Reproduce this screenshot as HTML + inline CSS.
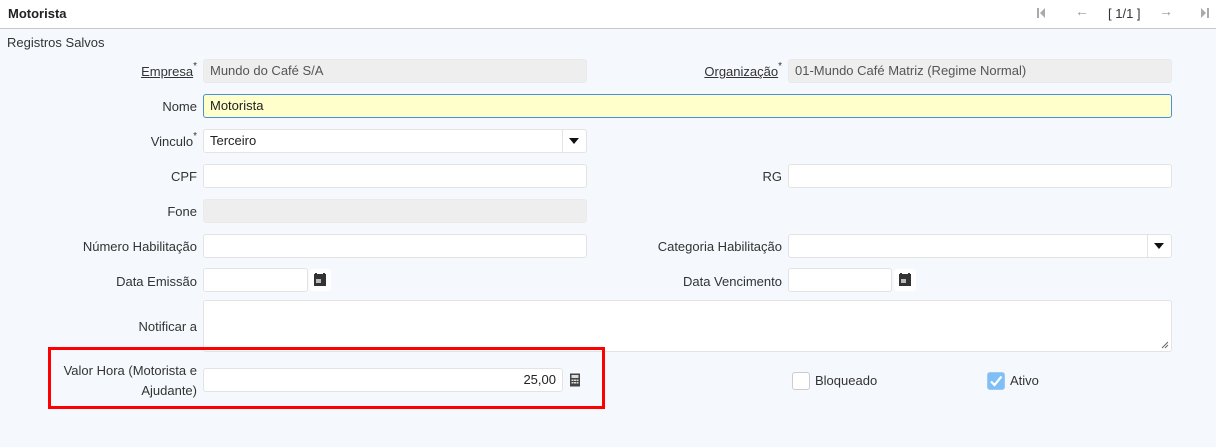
<!DOCTYPE html>
<html><head><meta charset="utf-8"><style>
*{box-sizing:border-box;margin:0;padding:0}
body{width:1216px;height:447px;background:#f5f8fc;font-family:"Liberation Sans",sans-serif;font-size:13px;color:#333;position:relative;overflow:hidden}
.hdr{position:absolute;left:0;top:0;width:1216px;height:29px;background:#fff;border-bottom:1px solid #c8c8c8}
.t{position:absolute;white-space:nowrap}
.lbl{position:absolute;text-align:right;white-space:nowrap;color:#333}
.l{right:1019px}.r{right:434px}
.in{position:absolute;background:#fff;border:1px solid #e3e3e3;border-radius:3px;height:24px;padding:0 6px;line-height:22px;color:#222}
.g{background:#eeeeee;border-color:#eaeaea;color:#555}
sup{font-size:10px;vertical-align:top;position:relative;top:-3px}
u{text-decoration:underline}
.dd{position:absolute;top:0;right:0;width:24px;height:22px;border-left:1px solid #e3e3e3}
.dd:after{content:"";position:absolute;left:6px;top:8px;border-left:5px solid transparent;border-right:5px solid transparent;border-top:6px solid #111}
.cal{position:absolute;width:22px;height:22px;background:#fff;border-radius:3px}
.cb{position:absolute;width:18px;height:18px;border:1px solid #ccc;border-radius:3px;background:#fff}
</style></head><body>
<div class="hdr"></div>
<div class="t" style="left:8px;top:6px;font-weight:bold;color:#222">Motorista</div>
<svg class="t" style="left:1036px;top:7px" width="10" height="12"><rect x="1" y="1" width="2" height="10" fill="#aaa"/><path d="M9 1 L4 6 L9 11Z" fill="#aaa"/></svg>
<div class="t" style="left:1075px;top:3px;color:#999;font-size:14px">←</div>
<div class="t" style="left:1108px;top:6px;color:#333">[ 1/1 ]</div>
<div class="t" style="left:1159px;top:3px;color:#999;font-size:14px">→</div>
<svg class="t" style="left:1200px;top:7px" width="10" height="12"><path d="M1 1 L6 6 L1 11Z" fill="#aaa"/><rect x="7" y="1" width="2" height="10" fill="#aaa"/></svg>
<div class="t" style="left:7px;top:35px">Registros Salvos</div>

<div class="lbl l" style="top:64px"><u>Empresa</u><sup>*</sup></div>
<div class="in g" style="left:203px;top:59px;width:384px">Mundo do Café S/A</div>
<div class="lbl r" style="top:64px"><u>Organização</u><sup>*</sup></div>
<div class="in g" style="left:788px;top:59px;width:384px">01-Mundo Café Matriz (Regime Normal)</div>

<div class="lbl l" style="top:99px">Nome</div>
<div class="in" style="left:203px;top:94px;width:969px;background:#ffffcc;border-color:#4a90d9">Motorista</div>

<div class="lbl l" style="top:134px">Vinculo<sup>*</sup></div>
<div class="in" style="left:203px;top:129px;width:384px">Terceiro<div class="dd"></div></div>

<div class="lbl l" style="top:169px">CPF</div>
<div class="in" style="left:203px;top:164px;width:384px"></div>
<div class="lbl r" style="top:169px">RG</div>
<div class="in" style="left:788px;top:164px;width:384px"></div>

<div class="lbl l" style="top:204px">Fone</div>
<div class="in g" style="left:203px;top:199px;width:384px"></div>

<div class="lbl l" style="top:239px">Número Habilitação</div>
<div class="in" style="left:203px;top:234px;width:384px"></div>
<div class="lbl r" style="top:239px">Categoria Habilitação</div>
<div class="in" style="left:788px;top:234px;width:384px"><div class="dd"></div></div>

<div class="lbl l" style="top:274px">Data Emissão</div>
<div class="in" style="left:203px;top:268px;width:105px"></div>
<div class="cal" style="left:309px;top:269px"><svg width="22" height="22"><rect x="5" y="5" width="12" height="12" fill="#333"/><rect x="6" y="4" width="2" height="2" fill="#333"/><rect x="14" y="4" width="2" height="2" fill="#333"/><rect x="7" y="10" width="5" height="4" fill="#bbb"/></svg></div>
<div class="lbl r" style="top:274px">Data Vencimento</div>
<div class="in" style="left:788px;top:268px;width:104px"></div>
<div class="cal" style="left:894px;top:269px"><svg width="22" height="22"><rect x="5" y="5" width="12" height="12" fill="#333"/><rect x="6" y="4" width="2" height="2" fill="#333"/><rect x="14" y="4" width="2" height="2" fill="#333"/><rect x="7" y="10" width="5" height="4" fill="#bbb"/></svg></div>

<div class="lbl l" style="top:319px">Notificar a</div>
<div class="in" style="left:203px;top:300px;width:969px;height:52px"><svg style="position:absolute;right:2px;bottom:2px" width="8" height="8"><path d="M1 7L7 1M4 7L7 4" stroke="#666"/></svg></div>

<div style="position:absolute;left:48px;top:347px;width:557px;height:62px;border:3px solid #f00"></div>
<div class="lbl l" style="top:361px;line-height:20px">Valor Hora (Motorista e<br>Ajudante)</div>
<div class="in" style="left:203px;top:368px;width:360px;text-align:right">25,00</div>
<svg style="position:absolute;left:569px;top:373px" width="12" height="14"><rect x="1" y="0.5" width="10" height="13" fill="#444"/><rect x="2.5" y="2" width="7" height="3" fill="#ddd"/><g fill="#ddd"><rect x="2.5" y="6.5" width="2" height="1.5"/><rect x="5" y="6.5" width="2" height="1.5"/><rect x="7.5" y="6.5" width="2" height="1.5"/><rect x="2.5" y="9" width="2" height="1.5"/><rect x="5" y="9" width="2" height="1.5"/><rect x="7.5" y="9" width="2" height="1.5"/></g></svg>

<div class="cb" style="left:792px;top:372px"></div>
<div class="t" style="left:815px;top:373px">Bloqueado</div>
<div class="cb" style="left:987px;top:372px;background:#7fbff5;border-color:#9ccaf0"><svg width="16" height="16"><path d="M3 8.5L6.5 12L13.5 3.5" stroke="#fff" stroke-width="2.2" fill="none"/></svg></div>
<div class="t" style="left:1010px;top:373px">Ativo</div>
</body></html>
